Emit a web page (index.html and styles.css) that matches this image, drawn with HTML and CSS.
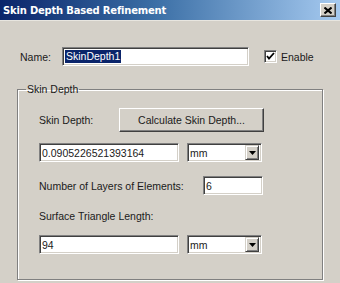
FILE: index.html
```html
<!DOCTYPE html>
<html>
<head>
<meta charset="utf-8">
<link rel="stylesheet" href="styles.css">
</head>
<body>
<div class="window">
  <div class="titlebar">
    <span class="title">Skin Depth Based Refinement</span>
    <span class="close"><svg width="8" height="7" viewBox="0 0 8 7"><path d="M0.5 0.5 L7.5 6.5 M7.5 0.5 L0.5 6.5" stroke="#000" stroke-width="2"/></svg></span>
  </div>
  <div class="content">
    <div class="name-row">
      <span class="label name-label">Name:</span>
      <div class="field name-field"><span class="sel">SkinDepth1</span></div>
      <span class="checkbox"><svg width="9" height="9" viewBox="0 0 9 9"><path d="M1 4 L3 6.5 L8 1" fill="none" stroke="#000" stroke-width="1.8"/></svg></span>
      <span class="label">Enable</span>
    </div>
    <fieldset class="group">
      <legend class="legend">Skin Depth</legend>
      <div class="row row-btn">
        <span class="label depth-label">Skin Depth:</span>
        <div class="button">Calculate Skin Depth...</div>
      </div>
      <div class="row row-val">
        <div class="field val-field">0.0905226521393164</div>
        <div class="field select"><span class="sel-text">mm</span><span class="drop"><svg width="7" height="4" viewBox="0 0 7 4"><path d="M0 0 H7 L3.5 4 Z" fill="#000"/></svg></span></div>
      </div>
      <div class="row row-layers">
        <span class="label layers-label">Number of Layers of Elements:</span>
        <div class="field num-field">6</div>
      </div>
      <div class="row row-tri">
        <span class="label">Surface Triangle Length:</span>
      </div>
      <div class="row row-val2">
        <div class="field val-field">94</div>
        <div class="field select"><span class="sel-text">mm</span><span class="drop"><svg width="7" height="4" viewBox="0 0 7 4"><path d="M0 0 H7 L3.5 4 Z" fill="#000"/></svg></span></div>
      </div>
    </fieldset>
  </div>
</div>
</body>
</html>
```

FILE: styles.css
```css
html, body {
  margin: 0;
  padding: 0;
  background: #d4d0c8;
}
.window {
  width: 340px;
  height: 283px;
  background: #d4d0c8;
  font-family: "Liberation Sans", Arial, sans-serif;
  font-size: 10.5px;
  color: #1a1a1a;
  overflow: hidden;
}
.titlebar {
  height: 20px;
  display: flex;
  align-items: center;
  justify-content: space-between;
  padding: 0 4px 0 3px;
  background: linear-gradient(to right, #0a246a 0%, #3a6ea5 45%, #a6caf0 100%);
  border-bottom: 1px solid #e8e6e0;
}
.title {
  color: #fff;
  font-family: "DejaVu Sans", Verdana, sans-serif;
  font-weight: bold;
  font-size: 10px;
  letter-spacing: -0.2px;
}
.close {
  width: 14px;
  height: 12px;
  display: flex;
  align-items: center;
  justify-content: center;
  background: #d4d0c8;
  border-top: 1px solid #fff;
  border-left: 1px solid #fff;
  border-right: 1px solid #404040;
  border-bottom: 1px solid #404040;
  box-shadow: inset -1px -1px 0 #808080;
}
.content {
  padding: 26px 0 0 17px;
}
.label {
  white-space: nowrap;
}
.name-row {
  display: flex;
  align-items: center;
  height: 19px;
}
.name-label {
  margin-left: 3px;
  width: 42px;
}
.field {
  box-sizing: border-box;
  background: #fff;
  border-top: 1px solid #808080;
  border-left: 1px solid #808080;
  border-right: 1px solid #fff;
  border-bottom: 1px solid #fff;
  box-shadow: inset 1px 1px 0 #404040, inset -1px -1px 0 #d4d0c8;
  height: 19px;
  display: flex;
  align-items: center;
  padding-left: 2px;
  white-space: nowrap;
}
.name-field {
  width: 187px;
}
.sel {
  background: #0a246a;
  color: #fff;
  padding: 0 1px;
  line-height: 13px;
}
.checkbox {
  box-sizing: border-box;
  margin-left: 15px;
  width: 13px;
  height: 13px;
  background: #fff;
  border-top: 1px solid #808080;
  border-left: 1px solid #808080;
  border-right: 1px solid #fff;
  border-bottom: 1px solid #fff;
  box-shadow: inset 1px 1px 0 #404040, inset -1px -1px 0 #d4d0c8;
  display: flex;
  align-items: center;
  justify-content: center;
  margin-right: 4px;
}
.group {
  box-sizing: border-box;
  width: 306px;
  height: 197px;
  margin: 17px 0 0 0;
  padding: 0 0 0 21px;
  border: 1px solid #808080;
  box-shadow: inset 1px 1px 0 #fff, 1px 1px 0 #fff;
}
.legend {
  padding: 0 1px;
  margin-left: -13px;
  line-height: 13px;
}
.row {
  display: flex;
  align-items: center;
}
.row-btn {
  margin-top: 12px;
  height: 24px;
}
.depth-label {
  width: 80px;
}
.button {
  box-sizing: border-box;
  width: 145px;
  height: 24px;
  display: flex;
  align-items: center;
  justify-content: center;
  border-top: 1px solid #fff;
  border-left: 1px solid #fff;
  border-right: 1px solid #404040;
  border-bottom: 1px solid #404040;
  box-shadow: inset -1px -1px 0 #808080;
}
.row-val {
  margin-top: 11px;
  gap: 8px;
}
.val-field {
  width: 140px;
}
.select {
  width: 75px;
  justify-content: space-between;
  padding-right: 2px;
}
.drop {
  box-sizing: border-box;
  width: 14px;
  height: 15px;
  display: flex;
  align-items: center;
  justify-content: center;
  background: #d4d0c8;
  border-top: 1px solid #d4d0c8;
  border-left: 1px solid #d4d0c8;
  border-right: 1px solid #404040;
  border-bottom: 1px solid #404040;
  box-shadow: inset 1px 1px 0 #fff, inset -1px -1px 0 #808080;
}
.row-layers {
  margin-top: 14px;
  height: 19px;
}
.layers-label {
  width: 164px;
}
.num-field {
  width: 60px;
}
.row-tri {
  margin-top: 14px;
  height: 13px;
}
.row-val2 {
  margin-top: 13px;
  gap: 8px;
}
```
